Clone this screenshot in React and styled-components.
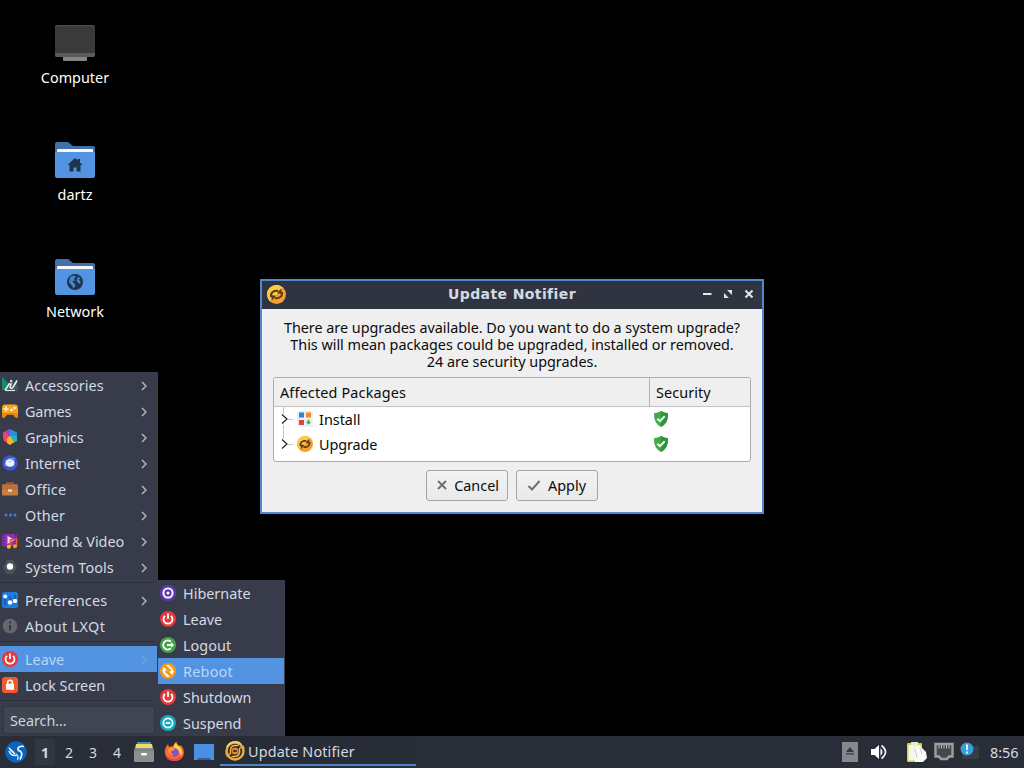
import styled, { createGlobalStyle } from "styled-components";

const GlobalStyle = createGlobalStyle`
  * {
    box-sizing: border-box;
  }
  body {
    margin: 0;
    background: #000;
    overflow: hidden;
    font-family: "Noto Sans", "Open Sans", sans-serif;
    font-size: 14.4px;
  }
  svg {
    display: block;
    flex: none;
  }
`;

const Desktop = styled.div`
  position: relative;
  display: flex;
  flex-direction: column;
  justify-content: space-between;
  width: 1024px;
  height: 768px;
  background: #000;
`;
const Shortcuts = styled.div`
  display: flex;
  flex-direction: column;
  width: 150px;
  padding-top: 22px;
`;
const Shortcut = styled.div`
  display: flex;
  flex-direction: column;
  align-items: center;
  gap: 4px;
  height: 117px;
  color: #fff;
  line-height: 20px;
`;
const Text = styled.span`
  letter-spacing: ${(p) => p.$track || 0}px;
  white-space: nowrap;
`;

const MenuPanel = styled.div`
  position: absolute;
  left: ${(p) => p.$left}px;
  bottom: 32px;
  width: ${(p) => p.$width}px;
  padding-right: 1px;
  background: #383c4a;
  color: #d3dae3;
`;
const MenuRow = styled.div`
  display: flex;
  align-items: center;
  height: 26px;
  padding: 2px 9px 0 2px;
  gap: 7px;
  line-height: 20px;
  background: ${(p) => (p.$active ? "#5294e2" : "transparent")};
  color: ${(p) => (p.$active ? "#b9d6f6" : "inherit")};
  & > svg:first-child {
    margin-top: -2px;
  }
  & > svg:last-child {
    margin-left: auto;
  }
`;
const Separator = styled.div`
  height: 7px;
  padding-top: 2px;
  &::before {
    content: "";
    display: block;
    height: 1px;
    margin-right: 3px;
    background: #2b2f3a;
  }
`;
const SearchArea = styled.div`
  height: 31px;
  padding: 1px 2px 2px 3px;
`;
const SearchField = styled.div`
  height: 28px;
  padding: 4px 6px;
  border: 1px solid #30343f;
  border-radius: 2px;
  background: #404552;
  line-height: 20px;
  color: #cdd3dd;
`;

const Window = styled.div`
  position: absolute;
  left: 260px;
  top: 279px;
  width: 504px;
  height: 235px;
  border: 2px solid #5088cb;
  background: #efefef;
  color: #0c0c0c;
`;
const TitleBar = styled.div`
  display: grid;
  grid-template-columns: 80px 1fr 80px;
  align-items: center;
  height: 28px;
  padding: 0 7px 2px 5px;
  background: #2f3440;
  color: #d3dae3;
`;
const Title = styled.div`
  padding-left: 2px;
  text-align: center;
  font: bold 14px/26px "DejaVu Sans", sans-serif;
`;
const WindowButtons = styled.div`
  display: flex;
  justify-content: flex-end;
  gap: 9px;
`;
const Message = styled.div`
  display: flex;
  flex-direction: column;
  align-items: center;
  padding-top: 10px;
  line-height: 17px;
`;
const Tree = styled.div`
  margin: 7px 11px 0;
  height: 85px;
  border: 1px solid #acacac;
  border-radius: 3px;
  background: #fff;
  overflow: hidden;
`;
const TreeRow = styled.div`
  display: grid;
  grid-template-columns: 375px 1fr;
  height: 25px;
`;
const TreeHeader = styled(TreeRow)`
  height: 29px;
  background: #efefef;
  border-bottom: 1px solid #c4c4c4;
  line-height: 29px;
`;
const HeaderCell = styled.div`
  padding-left: 6px;
  & + & {
    border-left: 1px solid #b4b4b4;
    padding-left: 6px;
  }
`;
const TreeCell = styled.div`
  display: flex;
  align-items: center;
  gap: 6px;
  padding-left: 5px;
  line-height: 25px;
`;
const TreeIcon = styled.div`
  padding-bottom: 2px;
  margin-left: ${(p) => p.$pull || 0}px;
`;
const Buttons = styled.div`
  display: flex;
  justify-content: center;
  gap: 8px;
  padding-top: 8px;
`;
const Button = styled.div`
  display: flex;
  align-items: center;
  justify-content: space-between;
  width: 82px;
  height: 31px;
  padding: 0 ${(p) => p.$end}px 0 ${(p) => p.$start}px;
  border: 1px solid #a6a6a6;
  border-radius: 3px;
  background: linear-gradient(#f3f3f3, #e9e9e9);
  & > svg {
    margin-top: -2px;
  }
`;

const Panel = styled.div`
  display: flex;
  align-items: center;
  justify-content: space-between;
  height: 32px;
  background: #292d38;
  color: #d3dae3;
`;
const PanelGroup = styled.div`
  display: flex;
  align-items: center;
  height: 100%;
`;
const MenuButton = styled.div`
  padding: 0 8px 0 5px;
`;
const Workspace = styled.div`
  width: ${(p) => (p.$current ? 20 : 24)}px;
  height: 26px;
  margin-right: ${(p) => (p.$current ? 2 : 0)}px;
  background: ${(p) => (p.$current ? "#323642" : "transparent")};
  font-weight: ${(p) => (p.$current ? 700 : 400)};
  line-height: 27px;
  text-align: center;
  font-size: 14px;
`;
const Launchers = styled(PanelGroup)`
  gap: 10px;
  padding: 0 6px 0 5px;
`;
const Task = styled.div`
  display: flex;
  align-items: center;
  align-self: flex-start;
  gap: 3px;
  width: 196px;
  height: 30px;
  padding: 2px 0 0 5px;
  border-bottom: 2px solid #4c87cc;
  background: #282c36;
`;
const Clock = styled.div`
  width: 38px;
  padding-left: 4px;
`;
const Tray = styled(PanelGroup)`
  gap: 6px;
`;
const TrayItem = styled.div`
  padding-left: ${(p) => p.$space}px;
`;

function Chevron({ color = "#b4bac5" }) {
  return (
    <svg width="8" height="10" viewBox="0 0 8 10">
      <path d="M2 1l4 4-4 4" fill="none" stroke={color} strokeWidth="1.4" />
    </svg>
  );
}

function Icon({ size = 16, box = 16, children }) {
  return (
    <svg width={size} height={size} viewBox={`0 0 ${box} ${box}`}>
      {children}
    </svg>
  );
}

const AccessoriesIcon = () => (
  <Icon>
    <path d="M0 0l7 7-4 6H0z" fill="#0f8c72" />
    <path d="M6 5h9l1 9H3z" fill="#41575f" />
    <path d="M3 13.500l4-6.500h2l-1 3.500q2 2 3.500-1l3.500-6" fill="none" stroke="#e9f1f0" strokeWidth="1.600" />
    <circle cx="9.200" cy="4" r="1.200" fill="#dfe9e8" />
    <path d="M4 13.500h9" stroke="#d8e8e4" strokeWidth="1.200" />
  </Icon>
);
const GamesIcon = () => (
  <Icon>
    <path d="M3 1.500h10q3 0 3 3.500v9q-2 1.500-3.500-.5L11 11.500H5l-1.500 2Q2 15.500 0 14V5q0-3.500 3-3.500z" fill="#fba51c" />
    <path d="M0 10h16v4q-2 1.500-3.500-.5L11 11.500H5l-1.500 2Q2 15.500 0 14z" fill="#f38118" />
    <path d="M1.500 6h5M4 3.500v5" stroke="#fff6dc" strokeWidth="1.700" />
    <circle cx="9.500" cy="7" r="1.200" fill="#fff" />
    <circle cx="12.500" cy="5" r="1.200" fill="#fff" />
  </Icon>
);
const GraphicsIcon = () => (
  <Icon>
    <path d="M8 0L1 3.500V9l7-1z" fill="#e44a6b" />
    <path d="M8 0l7 3.500V8H8z" fill="#2a8fe0" />
    <path d="M15 7v5l-4 2-3-7z" fill="#23b9b5" />
    <path d="M8 0L3 2.500 8 8z" fill="#a63fc4" />
    <path d="M1 8l5 .5L7 15l-5-3z" fill="#f14f45" />
    <path d="M5 9l3-2 4 6-4 3-3-2z" fill="#fbb52d" />
  </Icon>
);
const InternetIcon = () => (
  <Icon>
    <circle cx="8" cy="8" r="7.700" fill="#3b57c8" />
    <path d="M3 11Q5 1 13 4" fill="none" stroke="#6f9bf0" strokeWidth="1.200" />
    <ellipse cx="8" cy="8" rx="4.500" ry="3.700" fill="#eef5ff" />
    <path d="M6 7q2 .5 4-1" stroke="#a9c5f5" fill="none" />
  </Icon>
);
const OfficeIcon = () => (
  <Icon>
    <path d="M5 4V2h6v2" fill="none" stroke="#9b5f35" strokeWidth="1.500" />
    <rect y="3.500" width="16" height="11" rx="1" fill="#c9803f" />
    <rect y="3.500" width="16" height="5.500" rx="1" fill="#bb7038" />
    <rect x="6" y="8.500" width="4" height="2" fill="#f8e8d6" />
  </Icon>
);
const OtherIcon = () => (
  <Icon>
    <g fill="#3f7fd2">
      <circle cx="4" cy="8" r="1.500" />
      <circle cx="8.500" cy="8" r="1.500" />
      <circle cx="13" cy="8" r="1.500" />
    </g>
  </Icon>
);
const SoundIcon = () => (
  <Icon>
    <rect y="1" width="15" height="12" rx="1" fill="#8a34ad" />
    <path d="M1.500 1v12M13.500 1v12" stroke="#4b1f72" strokeWidth="1.500" strokeDasharray="1.500 1.500" />
    <path d="M5.500 3l7 4-7 4z" fill="#f5d8fb" />
    <path d="M8.500 13.500V7l6-1v7" fill="none" stroke="#f4572f" strokeWidth="1.700" />
    <circle cx="6.800" cy="13.700" r="2" fill="#fdbb2b" />
    <circle cx="13" cy="13.200" r="2" fill="#f99627" />
  </Icon>
);
const SystemIcon = () => (
  <Icon>
    <path d="M5 1h6l4 7-4 7H5L1 8z" fill="#46555c" />
    <circle cx="8" cy="7.500" r="3.200" fill="#fff" />
  </Icon>
);
const PreferencesIcon = () => (
  <Icon>
    <rect width="16" height="16" rx="2.500" fill="#1e7ddc" />
    <path d="M3 4v9M8 4v8M13 3v9" stroke="#0f529b" strokeWidth="1.500" />
    <g fill="#fff">
      <circle cx="3.200" cy="4.500" r="2" />
      <circle cx="8" cy="10.500" r="2.200" />
      <circle cx="13" cy="9" r="2.200" />
    </g>
  </Icon>
);
const InfoIcon = () => (
  <Icon>
    <circle cx="8" cy="8" r="7.300" fill="#65676c" />
    <path d="M8 3.500v2M8 7v5.500" stroke="#363a46" strokeWidth="2" />
  </Icon>
);
const PowerIcon = () => (
  <Icon>
    <circle cx="8" cy="8" r="8" fill="#e53a39" />
    <path d="M5 4.800a4.500 4.500 0 1 0 6 0M8 2.500V8" fill="none" stroke="#fff" strokeWidth="1.800" />
  </Icon>
);
const LockIcon = () => (
  <Icon>
    <rect width="16" height="16" rx="3" fill="#f2592b" />
    <path d="M5.700 8V5.500a2.300 2.300 0 0 1 4.600 0V8" fill="none" stroke="#fff" strokeWidth="1.600" />
    <rect x="4" y="6.800" width="8" height="6" rx=".5" fill="#fff" />
  </Icon>
);
const HibernateIcon = () => (
  <Icon>
    <circle cx="8" cy="8" r="8" fill="#5f3bb3" />
    <circle cx="8" cy="8" r="4.600" fill="none" stroke="#fff" strokeWidth="1.900" />
    <circle cx="8" cy="8" r="1.500" fill="#fff" />
  </Icon>
);
const LogoutIcon = () => (
  <Icon>
    <circle cx="8" cy="8" r="8" fill="#43a24b" />
    <path d="M10.800 4.700a4.500 4.500 0 1 0 0 6.600M7 8h5" fill="none" stroke="#fff" strokeWidth="1.900" />
    <path d="M11 5.300L14.200 8 11 10.700z" fill="#fff" />
  </Icon>
);
const RebootIcon = () => (
  <Icon>
    <circle cx="8" cy="8" r="8" fill="#f79b13" />
    <path d="M7.500 12.200a4.200 4.200 0 0 1-3.500-5M8.500 3.800a4.200 4.200 0 0 1 3.500 5" fill="none" stroke="#fff" strokeWidth="1.900" />
    <path d="M1.800 8L4 4l3 3.500zM14.200 8L12 12 9 8.500zM6 2h3.500v4zM10 14H6.500v-4z" fill="#fff" />
  </Icon>
);
const SuspendIcon = () => (
  <Icon>
    <circle cx="8" cy="8" r="8" fill="#17aabd" />
    <circle cx="8" cy="8" r="4.600" fill="none" stroke="#fff" strokeWidth="1.700" />
    <path d="M5.700 8h4.600" stroke="#fff" strokeWidth="1.700" />
  </Icon>
);

const UpdateIcon = ({ size = 16 }) => (
  <Icon size={size}>
    <circle cx="8" cy="8" r="8" fill="#f3a033" />
    <path d="M0 8A8 8 0 0 1 13.600 2.300L2.300 13.600Q0 11 0 8z" fill="#fbcb45" />
    <path d="M3.500 10C2.500 6.500 6 4.300 9.500 5M12.500 6c1 3.500-2.500 5.700-6 5" fill="none" stroke="#5b3b18" strokeWidth="1.700" />
    <path d="M8.500 7l3.500-4.300.500 4.800zM7.500 9L4 13.300l-.5-4.800z" fill="#5b3b18" />
  </Icon>
);
const TaskIcon = () => (
  <Icon size={20} box={20}>
    <circle cx="10" cy="10" r="8.500" fill="none" stroke="#efb043" strokeWidth="2.400" />
    <path d="M2 6A9 9 0 0 1 16 3" fill="none" stroke="#ffd75a" strokeWidth="1.500" />
    <path d="M5.500 13q-1-8 4-8.500h4M14.500 7q1 8-4 8.500h-4" fill="none" stroke="#f4b746" strokeWidth="1.500" />
    <circle cx="10" cy="10" r="3.500" fill="#e0832c" />
    <path d="M8.200 10h3.600" stroke="#382c28" strokeWidth="1.800" />
    <path d="M0 12l6 1-4 3zM20 8l-6-1 4-3z" fill="#eca735" />
  </Icon>
);
const InstallIcon = () => (
  <Icon>
    <rect width="16" height="16" rx="1" fill="#eceff1" />
    <rect x="2" y="1.500" width="5" height="5" fill="#1e88d0" />
    <rect x="9" y="1.500" width="5" height="5" fill="#f28a2c" />
    <rect x="2" y="9" width="5" height="5" fill="#df453d" />
    <path d="M11.500 8.800v3" stroke="#3ea34a" strokeWidth="1.600" />
    <path d="M8.900 10.800h5.200l-2.600 3z" fill="#3ea34a" />
  </Icon>
);
const ShieldIcon = () => (
  <Icon>
    <path d="M8 0q3 2 7 2.200Q15.500 12 8 16 .5 12 1 2.200 5 2 8 0z" fill="#43a84b" />
    <path d="M8 0q3 2 7 2.200Q15.500 12 8 16z" fill="#2f9340" />
    <path d="M4.300 7.800L7 10.200l4.700-5" fill="none" stroke="#e9ffe8" strokeWidth="2" />
  </Icon>
);
const Branch = ({ first }) => (
  <svg width="15" height="25" viewBox="0 0 15 25">
    <path d={first ? "M4.500 0v7M4.500 18v7M9 12.500h5" : "M4.500 0v7M9 12.500h5"} stroke="#c4c4c4" fill="none" />
    <path d="M3 7.500l5 4.500-5 4.500" stroke="#222" strokeWidth="1.200" fill="none" />
  </svg>
);

const ComputerIcon = () => (
  <Icon size={42} box={42}>
    <rect x="1" y="3" width="40" height="32" rx="2" fill="#3a3a3a" />
    <path d="M1 31h40v2q0 2-2 2H3q-2 0-2-2z" fill="#5c5c5c" />
    <path d="M1.500 5q0-1.500 2-1.500h35q2 0 2 1.500" fill="none" stroke="#505050" />
    <path d="M9 35h24v3q0 1-1 1H10q-1 0-1-1z" fill="#858585" />
  </Icon>
);
const Folder = ({ children }) => (
  <Icon size={42} box={42}>
    <path d="M1 5q0-2 2-2h11l5 4h20q2 0 2 2v14H1z" fill="#456fa9" />
    <rect x="3" y="10" width="36" height="10" rx="1" fill="#f5f7fa" />
    <path d="M1 13h40v24q0 2-2 2H3q-2 0-2-2z" fill="#5294e2" />
    {children}
  </Icon>
);
const HomeGlyph = () => (
  <path d="M21 19l2.500 2.300V20H26v3.500l2.500 2.500h-2v6.500h-4v-4h-3v4h-4V26h-2z" fill="#1d344f" />
);
const GlobeGlyph = () => (
  <g>
    <circle cx="21" cy="26" r="8" fill="#1d344f" />
    <path d="M16 21l4-1.500 2 1-2 2 1 2-3 .500 2 2 1.500 2.500-2 3-1.500-3-3-3zM24 20.500l2.500 2-2 1 2 2-.5 2.500-2-1.500-1.500-2z" fill="#5294e2" opacity=".85" />
  </g>
);

const LxqtIcon = () => (
  <Icon size={22} box={22}>
    <circle cx="11" cy="11" r="10.700" fill="#0a63bd" />
    <path d="M3 6q4 1.500 8 7.500-5-1-8-7.500z" fill="#eef6ff" />
    <path d="M4 10q1.500 5 7.500 4.500" fill="none" stroke="#eef6ff" strokeWidth="1.400" />
    <path d="M19 5.500q-5-1-6 2-.500 2 2 2.500 3.500 2 0 8.500" fill="none" stroke="#eef6ff" strokeWidth="1.700" />
    <path d="M11 13q3 2 1.500 6" fill="none" stroke="#cfe4f9" strokeWidth="1.300" />
  </Icon>
);
const FilesIcon = () => (
  <Icon size={20} box={20}>
    <rect x="3" width="14" height="5" rx="1" fill="#4d91b8" />
    <path d="M2 2h16l1 5H1z" fill="#eedb63" />
    <path d="M1 6h18l1 2v11q0 1-1 1H1q-1 0-1-1V8z" fill="#8c8e8d" />
    <path d="M0 8h20" stroke="#777978" />
    <rect x="7" y="11" width="6" height="2.500" rx="1" fill="#fff" />
  </Icon>
);
const FirefoxIcon = () => (
  <Icon size={20} box={20}>
    <path d="M1 8Q2 4 4 2l1 3 4-1q1-3 4-4 0 3 3 4l1-1q6 8 0 14-6 4-12 0-5-4-4-9z" fill="#fb6a32" />
    <path d="M12 0q0 3 3 4 5 5 2 10-2-7-7-8 0-4 2-6z" fill="#ffd042" />
    <path d="M1 10q1 7 9 7 5 0 8-4-2 6-8 6Q1 19 1 10z" fill="#f0414f" />
    <circle cx="10.500" cy="10.500" r="4.300" fill="#8453ce" />
    <path d="M5 6q3-1 6 1-1 2-4 2 0 3 3 4-5 1-6-4z" fill="#fd9530" />
  </Icon>
);
const ShowDesktopIcon = () => (
  <Icon size={20} box={20}>
    <path d="M0 2h20v16h-3l-2-2H5l-2 2H0z" fill="#4a90e2" />
    <path d="M3 18l2-2h10l2 2z" fill="#315f98" />
  </Icon>
);
const EjectIcon = () => (
  <svg width="16" height="20" viewBox="0 0 16 20">
    <rect width="16" height="20" fill="#86888b" />
    <path d="M8 5l4 5H4zM4 11.200h8v1.400H4z" fill="#343841" />
  </svg>
);
const VolumeIcon = () => (
  <svg width="17" height="16" viewBox="0 0 17 16">
    <path d="M0 5h3.500L8 1v14l-4.500-4H0z" fill="#fff" />
    <path d="M9.500 4q4 4 0 8z" fill="#fff" />
    <path d="M10.500 1.500q8 6.500 0 13" fill="none" stroke="#f1f3f6" strokeWidth="1.700" />
  </svg>
);
const ClipboardIcon = () => (
  <Icon size={20} box={20}>
    <rect y="1" width="15" height="19" rx="1" fill="#cdd636" />
    <rect x="1.500" y="3" width="12" height="15.500" fill="#f6f7ec" />
    <rect x="4" width="7" height="3.500" fill="#e7e9d0" />
    <path d="M8 5h6l5 5 1 6-4 4H8z" fill="#fbfbfb" />
    <path d="M8 7l2 9M13 6l2 6" stroke="#c9cbc8" />
  </Icon>
);
const EthernetIcon = () => (
  <Icon size={20} box={20}>
    <path d="M1.500 2h17v12.500H15L13 17H7l-2-2.500H1.500z" fill="#46484b" stroke="#9c9ea1" strokeWidth="2.400" />
    <path d="M5 3v3.500M7.500 3v3.500M10 3v3.500M12.500 3v3.500M15 3v3.500" stroke="#b5b7b9" />
  </Icon>
);
const NoticeIcon = () => (
  <Icon size={20} box={20}>
    <rect x="2" y="4" width="17" height="13" rx="1" fill="#383c46" />
    <circle cx="7" cy="7" r="6.500" fill="#3a9fd8" />
    <path d="M7 2.500v5.500M7 9.500v2" stroke="#fff" strokeWidth="1.800" />
  </Icon>
);

const shortcuts = [
  { name: "Computer", icon: <ComputerIcon /> },
  { name: "dartz", icon: <Folder><HomeGlyph /></Folder> },
  { name: "Network", icon: <Folder><GlobeGlyph /></Folder> },
];
const menu = [
  [
    { name: "Accessories", icon: <AccessoriesIcon />, sub: true, track: 0.03 },
    { name: "Games", icon: <GamesIcon />, sub: true, track: -0.15 },
    { name: "Graphics", icon: <GraphicsIcon />, sub: true, track: -0.1 },
    { name: "Internet", icon: <InternetIcon />, sub: true },
    { name: "Office", icon: <OfficeIcon />, sub: true, track: 0.25 },
    { name: "Other", icon: <OtherIcon />, sub: true, track: 0.15 },
    { name: "Sound & Video", icon: <SoundIcon />, sub: true },
    { name: "System Tools", icon: <SystemIcon />, sub: true, track: 0.1 },
  ],
  [
    { name: "Preferences", icon: <PreferencesIcon />, sub: true, track: 0.2 },
    { name: "About LXQt", icon: <InfoIcon />, track: 0.35 },
  ],
  [
    { name: "Leave", icon: <PowerIcon />, sub: true, active: true },
    { name: "Lock Screen", icon: <LockIcon /> },
  ],
];
const leaveMenu = [
  { name: "Hibernate", icon: <HibernateIcon /> },
  { name: "Leave", icon: <PowerIcon /> },
  { name: "Logout", icon: <LogoutIcon />, track: 0.05 },
  { name: "Reboot", icon: <RebootIcon />, active: true, track: 0.25 },
  { name: "Shutdown", icon: <PowerIcon /> },
  { name: "Suspend", icon: <SuspendIcon /> },
];

function MenuItem({ item }) {
  return (
    <MenuRow $active={item.active}>
      {item.icon}
      <Text $track={item.track}>{item.name}</Text>
      {item.sub && <Chevron color={item.active ? "#6fa3df" : undefined} />}
    </MenuRow>
  );
}

function MainMenu() {
  return (
    <MenuPanel $left={0} $width={158}>
      {menu.map((group, i) => (
        <div key={i}>
          {group.map((item) => (
            <MenuItem key={item.name} item={item} />
          ))}
          <Separator />
        </div>
      ))}
      <SearchArea>
        <SearchField>
          <Text $track={-0.05}>Search...</Text>
        </SearchField>
      </SearchArea>
    </MenuPanel>
  );
}

function PackageRow({ name, icon, first, track }) {
  return (
    <TreeRow>
      <TreeCell>
        <Branch first={first} />
        <TreeIcon $pull={-3}>{icon}</TreeIcon>
        <Text $track={track}>{name}</Text>
      </TreeCell>
      <TreeCell>
        <TreeIcon $pull={-1}>
          <ShieldIcon />
        </TreeIcon>
      </TreeCell>
    </TreeRow>
  );
}

function UpdateWindow() {
  return (
    <Window>
      <TitleBar>
        <UpdateIcon size={19} />
        <Title>
          <Text $track={0.4}>Update Notifier</Text>
        </Title>
        <WindowButtons>
          <Icon size={12} box={12}>
            <path d="M2 6h8.500" stroke="#e3e7ee" strokeWidth="2" />
          </Icon>
          <Icon size={12} box={12}>
            <path d="M5 2h5v5zM2 5l5 5H2z" fill="#dfe4eb" />
          </Icon>
          <Icon size={12} box={12}>
            <path d="M2.500 2.500l7 7M9.500 2.500l-7 7" stroke="#e3e7ee" strokeWidth="2" />
          </Icon>
        </WindowButtons>
      </TitleBar>
      <Message>
        <Text $track={-0.03}>There are upgrades available. Do you want to do a system upgrade?</Text>
        <Text $track={-0.03}>This will mean packages could be upgraded, installed or removed.</Text>
        <Text>24 are security upgrades.</Text>
      </Message>
      <Tree>
        <TreeHeader>
          <HeaderCell>
            <Text $track={0.16}>Affected Packages</Text>
          </HeaderCell>
          <HeaderCell>
            <Text $track={0.1}>Security</Text>
          </HeaderCell>
        </TreeHeader>
        <PackageRow name="Install" icon={<InstallIcon />} first />
        <PackageRow name="Upgrade" icon={<UpdateIcon />} track={-0.1} />
      </Tree>
      <Buttons>
        <Button $start={10} $end={8}>
          <Icon size={10} box={10}>
            <path d="M1 1l8 8M9 1L1 9" stroke="#707070" strokeWidth="1.900" />
          </Icon>
          <Text>Cancel</Text>
        </Button>
        <Button $start={10} $end={11}>
          <Icon size={14} box={14}>
            <path d="M1.500 8L5 11.500 12.500 3" fill="none" stroke="#707070" strokeWidth="2" />
          </Icon>
          <Text>Apply</Text>
        </Button>
      </Buttons>
    </Window>
  );
}

function Taskbar() {
  return (
    <Panel>
      <PanelGroup>
        <MenuButton>
          <LxqtIcon />
        </MenuButton>
        <Workspace $current>1</Workspace>
        <Workspace>2</Workspace>
        <Workspace>3</Workspace>
        <Workspace>4</Workspace>
        <Launchers>
          <FilesIcon />
          <FirefoxIcon />
          <ShowDesktopIcon />
        </Launchers>
        <Task>
          <TaskIcon />
          <Text $track={0.14}>Update Notifier</Text>
        </Task>
      </PanelGroup>
      <Tray>
        <EjectIcon />
        <TrayItem $space={7}>
          <VolumeIcon />
        </TrayItem>
        <TrayItem $space={13}>
          <ClipboardIcon />
        </TrayItem>
        <TrayItem $space={1}>
          <EthernetIcon />
        </TrayItem>
        <NoticeIcon />
        <Clock>
          <Text>8:56</Text>
        </Clock>
      </Tray>
    </Panel>
  );
}

export default function App() {
  return (
    <>
      <GlobalStyle />
      <Desktop>
        <Shortcuts>
          {shortcuts.map((s) => (
            <Shortcut key={s.name}>
              {s.icon}
              <Text>{s.name}</Text>
            </Shortcut>
          ))}
        </Shortcuts>
        <Taskbar />
        <MainMenu />
        <MenuPanel $left={158} $width={127}>
          {leaveMenu.map((item) => (
            <MenuItem key={item.name} item={item} />
          ))}
        </MenuPanel>
        <UpdateWindow />
      </Desktop>
    </>
  );
}
